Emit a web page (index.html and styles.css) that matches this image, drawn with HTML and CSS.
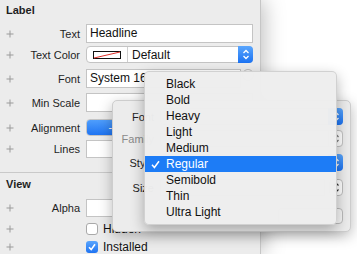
FILE: index.html
```html
<!DOCTYPE html>
<html lang="en">
<head>
    <meta charset="UTF-8">
    <title>Label Inspector</title>
    <link rel="stylesheet" href="styles.css">
</head>
<body>
    <div class="inspector">
        <!-- Label section -->
        <div class="section-title">Label</div>

        <div class="row row-text">
            <svg class="plus" width="8" height="8" viewBox="0 0 8 8"><path d="M4 0.5V7.5M0.5 4H7.5"/></svg>
            <span class="name">Text</span>
            <div class="field">Headline</div>
        </div>

        <div class="row row-color">
            <svg class="plus" width="8" height="8" viewBox="0 0 8 8"><path d="M4 0.5V7.5M0.5 4H7.5"/></svg>
            <span class="name">Text Color</span>
            <div class="color-popup">
                <div class="swatch-box">
                    <svg width="28" height="8" viewBox="0 0 28 8"><rect x="0.5" y="0.5" width="27" height="7" fill="#fff" stroke="#111"/><path d="M1 7L27 1" stroke="#e0302a" stroke-width="1"/></svg>
                </div>
                <span class="color-name">Default</span>
                <span class="stepper blue">
                    <svg width="8" height="11" viewBox="0 0 8 11"><path d="M1.5 4L4 1.5L6.5 4M1.5 7L4 9.5L6.5 7"/></svg>
                </span>
            </div>
        </div>

        <div class="row row-font">
            <svg class="plus" width="8" height="8" viewBox="0 0 8 8"><path d="M4 0.5V7.5M0.5 4H7.5"/></svg>
            <span class="name">Font</span>
            <div class="field font-field">System 16</div>
            <span class="font-button"></span>
        </div>

        <div class="row row-scale">
            <svg class="plus" width="8" height="8" viewBox="0 0 8 8"><path d="M4 0.5V7.5M0.5 4H7.5"/></svg>
            <span class="name">Min Scale</span>
            <div class="field"></div>
        </div>

        <div class="row row-align">
            <svg class="plus" width="8" height="8" viewBox="0 0 8 8"><path d="M4 0.5V7.5M0.5 4H7.5"/></svg>
            <span class="name">Alignment</span>
            <div class="segmented">
                <span class="segment selected">---</span>
                <span class="segment"></span>
                <span class="segment"></span>
            </div>
        </div>

        <div class="row row-lines">
            <svg class="plus" width="8" height="8" viewBox="0 0 8 8"><path d="M4 0.5V7.5M0.5 4H7.5"/></svg>
            <span class="name">Lines</span>
            <div class="field"></div>
        </div>

        <div class="separator"></div>

        <!-- View section -->
        <div class="section-title view-title">View</div>

        <div class="row row-alpha">
            <svg class="plus" width="8" height="8" viewBox="0 0 8 8"><path d="M4 0.5V7.5M0.5 4H7.5"/></svg>
            <span class="name">Alpha</span>
            <div class="field"></div>
        </div>

        <div class="row row-check row-hidden">
            <svg class="plus" width="8" height="8" viewBox="0 0 8 8"><path d="M4 0.5V7.5M0.5 4H7.5"/></svg>
            <span class="name"></span>
            <span class="checkbox"></span>
            <span class="check-label">Hidden</span>
        </div>

        <div class="row row-check row-installed">
            <svg class="plus" width="8" height="8" viewBox="0 0 8 8"><path d="M4 0.5V7.5M0.5 4H7.5"/></svg>
            <span class="name"></span>
            <span class="checkbox checked">
                <svg width="12" height="12" viewBox="0 0 12 12"><path d="M3 6.3L5.2 8.6L9 3.2"/></svg>
            </span>
            <span class="check-label">Installed</span>
        </div>
    </div>

    <!-- Font popover -->
    <div class="popover">
        <div class="pop-row pop-font">
            <span class="pop-name">Font</span>
            <div class="popup"><span class="stepper blue"><svg width="8" height="11" viewBox="0 0 8 11"><path d="M1.5 4L4 1.5L6.5 4M1.5 7L4 9.5L6.5 7"/></svg></span></div>
        </div>
        <div class="pop-row pop-family">
            <span class="pop-name disabled">Family</span>
            <div class="popup"><span class="stepper plain"><svg width="8" height="11" viewBox="0 0 8 11"><path d="M1.5 4L4 1.5L6.5 4M1.5 7L4 9.5L6.5 7"/></svg></span></div>
        </div>
        <div class="pop-row pop-style">
            <span class="pop-name">Style</span>
            <div class="popup"><span class="stepper blue"><svg width="8" height="11" viewBox="0 0 8 11"><path d="M1.5 4L4 1.5L6.5 4M1.5 7L4 9.5L6.5 7"/></svg></span></div>
        </div>
        <div class="pop-row pop-size">
            <span class="pop-name">Size</span>
            <div class="size-field"></div>
            <span class="size-stepper"><svg width="8" height="13" viewBox="0 0 8 13"><path d="M1.5 4.5L4 2L6.5 4.5M1.5 8.5L4 11L6.5 8.5"/></svg></span>
        </div>
        <div class="pop-row pop-done">
            <span class="done-button"></span>
        </div>
    </div>

    <!-- Style menu -->
    <ul class="menu">
        <li>Black</li>
        <li>Bold</li>
        <li>Heavy</li>
        <li>Light</li>
        <li>Medium</li>
        <li class="selected"><svg class="tick" width="9" height="9" viewBox="0 0 9 9"><path d="M1 4.8L3.4 7.5L8 1.2"/></svg>Regular</li>
        <li>Semibold</li>
        <li>Thin</li>
        <li>Ultra Light</li>
    </ul>
</body>
</html>
```

FILE: styles.css
```css
* {
    box-sizing: border-box;
}

html, body {
    margin: 0;
}

body {
    position: relative;
    width: 357px;
    height: 254px;
    overflow: hidden;
    background-color: #fff;
    font-family: "Liberation Sans", Arial, sans-serif;
    color: #1e1e1e;
}

/* inspector panel */
.inspector {
    width: 261px;
    height: 254px;
    background-color: #ececec;
    border-right: 1px solid #c6c6c6;
    box-shadow: 3px 0 20px rgba(0, 0, 0, 0.26);
}

.section-title {
    height: 22px;
    line-height: 20px;
    padding-left: 6px;
    font-size: 11px;
    font-weight: bold;
}

.view-title {
    line-height: 22px;
}

.row {
    display: flex;
    align-items: center;
    padding-left: 6px;
}

.plus {
    flex: none;
    stroke: #9a9a9a;
    stroke-width: 1;
    fill: none;
}

.name {
    flex: none;
    width: 66px;
    text-align: right;
    font-size: 11px;
    margin-right: 6px;
}

.field {
    width: 167px;
    height: 100%;
    background-color: #fff;
    border: 1px solid #c4c4c4;
    font-size: 12px;
    line-height: 17px;
    padding-left: 3px;
    color: #111;
}

.row-text { margin-top: 2px; height: 19px; }
.row-color { margin-top: 3px; height: 17px; }
.row-font { margin-top: 6px; height: 19px; }
.row-scale { margin-top: 5px; height: 19px; }
.row-align { margin-top: 7px; height: 17px; }
.row-lines { margin-top: 4px; height: 18px; }
.row-alpha { margin-top: 4px; height: 18px; }
.row-hidden { margin-top: 6px; height: 12px; }
.row-installed { margin-top: 6px; height: 12px; }

.font-field {
    width: 155px;
}

.font-button {
    width: 12px;
    height: 12px;
    margin-left: 1px;
    align-self: flex-start;
    border: 1px solid #b8b8b8;
    border-radius: 50%;
    background-color: #f4f4f4;
}

/* colour popup */
.color-popup {
    display: flex;
    align-items: center;
    width: 167px;
    height: 17px;
    background-color: #fff;
    border: 1px solid #c4c4c4;
    border-radius: 4px;
}

.swatch-box {
    display: flex;
    align-items: center;
    width: 41px;
    height: 100%;
    padding-left: 6px;
    border-right: 1px solid #cfcfcf;
}

.swatch-box svg {
    display: block;
}

.color-name {
    flex: 1;
    padding-left: 4px;
    font-size: 12px;
    color: #111;
}

.stepper {
    display: flex;
    align-items: center;
    justify-content: center;
    width: 15px;
    height: 17px;
    margin: -1px -1px -1px 0;
    border-radius: 0 4px 4px 0;
}

.stepper svg {
    fill: none;
    stroke-width: 1.3;
}

.stepper.blue {
    background: linear-gradient(#5aa6fd, #1b72f2);
}

.stepper.blue svg {
    stroke: #fff;
}

.stepper.plain {
    background-color: #fff;
    border: 1px solid #c4c4c4;
}

.stepper.plain svg {
    stroke: #7a7a7a;
}

/* alignment segments */
.segmented {
    display: flex;
    width: 167px;
    height: 17px;
    border: 1px solid #c4c4c4;
    border-radius: 4px;
    background-color: #fff;
    overflow: hidden;
}

.segment {
    flex: 1;
    border-right: 1px solid #c4c4c4;
    font-size: 11px;
    line-height: 15px;
    text-align: center;
}

.segment.selected {
    background: linear-gradient(#4f9efc, #1f74f2);
    color: #fff;
    border-right-color: #1f74f2;
}

.separator {
    margin-top: 14px;
    height: 1px;
    background-color: #c9c9c9;
}

/* checkboxes */
.checkbox {
    display: flex;
    width: 12px;
    height: 12px;
    background-color: #fff;
    border: 1px solid #a9a9a9;
    border-radius: 3px;
}

.checkbox.checked {
    background: linear-gradient(#59a5fd, #1e73f2);
    border: none;
}

.checkbox svg {
    fill: none;
    stroke: #fff;
    stroke-width: 1.6;
}

.check-label {
    margin-left: 5px;
    font-size: 12px;
    color: #111;
}

/* font popover */
.popover {
    position: absolute;
    left: 112px;
    top: 100px;
    width: 239px;
    height: 132px;
    background-color: #ececec;
    border: 1px solid #cdcdcd;
    border-radius: 5px;
    box-shadow: 0 4px 14px rgba(0, 0, 0, 0.28);
}

.pop-row {
    display: flex;
    align-items: center;
    height: 17px;
}

.pop-font { margin-top: 7px; }
.pop-family { margin-top: 5px; }
.pop-style { margin-top: 7px; }
.pop-size { margin-top: 8px; }
.pop-done { margin-top: 12px; height: 16px; justify-content: flex-end; padding-right: 7px; }

.pop-name {
    width: 41px;
    text-align: right;
    font-size: 11px;
    margin-right: 6px;
}

.pop-name.disabled {
    color: #8a8a8a;
}

.popup {
    display: flex;
    justify-content: flex-end;
    width: 183px;
    height: 17px;
    background-color: #fff;
    border: 1px solid #c4c4c4;
    border-radius: 4px;
}

.size-field {
    width: 165px;
    height: 17px;
    background-color: #fff;
    border: 1px solid #c4c4c4;
}

.size-stepper {
    display: flex;
    align-items: center;
    justify-content: center;
    width: 14px;
    height: 17px;
    margin-left: 4px;
    background-color: #fff;
    border: 1px solid #bdbdbd;
    border-radius: 4px;
}

.size-stepper svg {
    fill: none;
    stroke: #333;
    stroke-width: 1.2;
}

.done-button {
    width: 65px;
    height: 16px;
    background-color: #f7f7f7;
    border: 1px solid #bcbcbc;
    border-radius: 4px;
}

/* style menu */
.menu {
    position: absolute;
    left: 144px;
    top: 71px;
    width: 193px;
    margin: 0;
    padding: 4px 0;
    list-style: none;
    background-color: rgba(238, 238, 238, 0.98);
    border: 1px solid rgba(0, 0, 0, 0.12);
    border-radius: 5px;
    box-shadow: 0 5px 14px rgba(0, 0, 0, 0.3);
}

.menu li {
    display: flex;
    align-items: center;
    height: 16px;
    padding-left: 21px;
    font-size: 12px;
    color: #111;
}

.menu li.selected {
    padding-left: 6px;
    background-color: #1d7cf6;
    color: #fff;
}

.tick {
    margin-right: 6px;
    fill: none;
    stroke: #fff;
    stroke-width: 1.5;
}
```
